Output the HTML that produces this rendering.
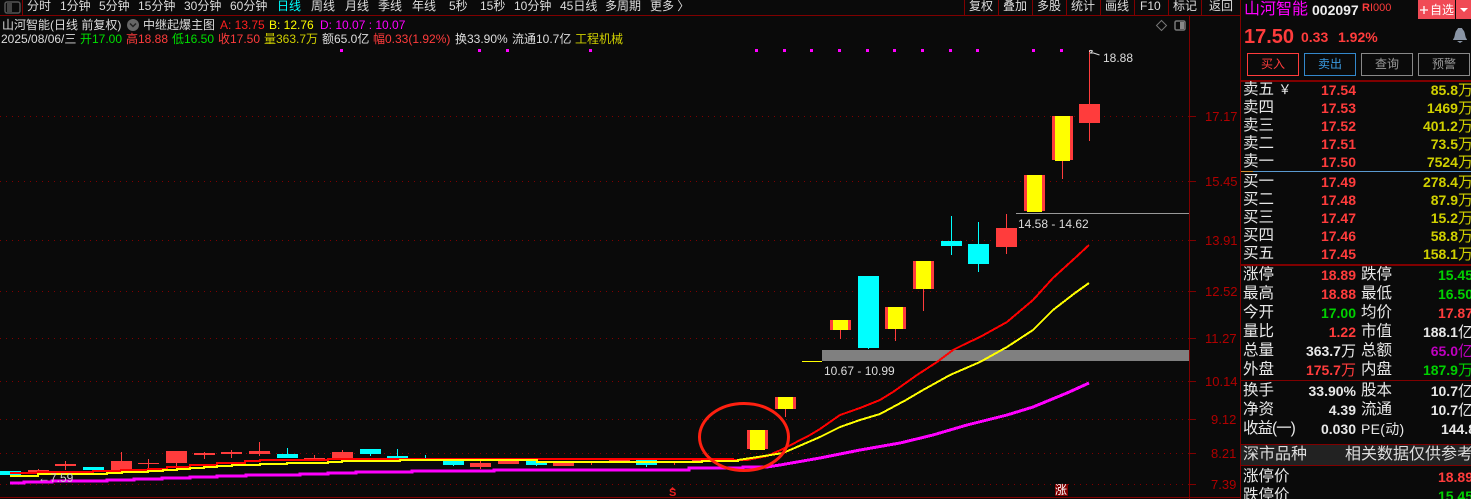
<!DOCTYPE html>
<html><head><meta charset="utf-8"><style>
html,body{margin:0;padding:0;background:#0a0a0a;width:1471px;height:499px;overflow:hidden}
body{position:relative;font-family:"Liberation Sans","WenQuanYi Zen Hei","Noto Sans CJK SC",sans-serif;font-size:12px;color:#ddd}
.t{position:absolute;white-space:nowrap;line-height:14px;height:14px}
.r{position:absolute;white-space:nowrap;line-height:16px;height:16px;text-align:right;font-weight:bold;font-size:14px}
.l{position:absolute;left:1243px;white-space:nowrap;line-height:16px;height:16px;font-size:15.5px;color:#e8e8e8}
.m{left:1361px}
.a{position:absolute;left:1205px;color:#b00000;font-size:13px;line-height:14px}
.re{color:#ff3c3c}.gr{color:#00d000}.ye{color:#d0d000}.wh{color:#e8e8e8}
.n{font-weight:normal;font-size:15px}
.btn{position:absolute;top:53px;height:21px;line-height:21px;width:50px;text-align:center;font-size:12px;border:1px solid #888;color:#999}
svg{position:absolute;left:0;top:0}
</style></head><body>
<svg width="1471" height="499" viewBox="0 0 1471 499">
<g shape-rendering="crispEdges">
<g stroke="#800000" stroke-width="1" stroke-dasharray="1 5">
<path d="M0 116.5H1189M0 181.5H1189M0 240.5H1189M0 291.5H1189M0 338.5H1189M0 381.5H1189M0 419.5H1189M0 453.5H1189M0 484.5H1189"/>
</g>
<g fill="#800000">
<rect x="0" y="15" width="1240" height="1"/><rect x="22" y="0" width="1" height="15"/>
<rect x="964" y="0" width="1" height="15"/><rect x="998" y="0" width="1" height="15"/><rect x="1032" y="0" width="1" height="15"/><rect x="1066" y="0" width="1" height="15"/><rect x="1100" y="0" width="1" height="15"/><rect x="1134" y="0" width="1" height="15"/><rect x="1168" y="0" width="1" height="15"/><rect x="1201" y="0" width="1" height="15"/>
<rect x="1189" y="16" width="1" height="483"/><rect x="1240" y="0" width="1" height="499"/>
<rect x="0" y="497" width="1240" height="1"/>
<rect x="1190" y="116" width="6" height="1"/><rect x="1190" y="181" width="6" height="1"/><rect x="1190" y="240" width="6" height="1"/><rect x="1190" y="291" width="6" height="1"/><rect x="1190" y="338" width="6" height="1"/><rect x="1190" y="381" width="6" height="1"/><rect x="1190" y="419" width="6" height="1"/><rect x="1190" y="453" width="6" height="1"/><rect x="1190" y="484" width="6" height="1"/>
<rect x="1241" y="80" width="230" height="2"/><rect x="1241" y="264" width="230" height="2"/><rect x="1241" y="380" width="230" height="1"/><rect x="1241" y="444" width="230" height="1"/><rect x="1241" y="465" width="230" height="1"/>
</g>
<rect x="1241" y="445" width="230" height="20" fill="#222"/>
<rect x="1241" y="171" width="230" height="1" fill="#5a9ad0"/><rect x="1241" y="171" width="12" height="1" fill="#d09030"/>
<g fill="#ff00ff">
<rect x="340" y="49" width="3" height="3"/><rect x="478" y="49" width="3" height="3"/><rect x="506" y="49" width="3" height="3"/><rect x="589" y="49" width="3" height="3"/><rect x="755" y="49" width="3" height="3"/><rect x="783" y="49" width="3" height="3"/><rect x="810" y="49" width="3" height="3"/><rect x="838" y="49" width="3" height="3"/><rect x="866" y="49" width="3" height="3"/><rect x="893" y="49" width="3" height="3"/><rect x="921" y="49" width="3" height="3"/><rect x="949" y="49" width="3" height="3"/><rect x="976" y="49" width="3" height="3"/><rect x="1032" y="49" width="3" height="3"/><rect x="1060" y="49" width="3" height="3"/>
</g>
<g fill="#ff3c3c">
<rect x="1079" y="104" width="21" height="19"/><rect x="1089" y="50" width="1" height="91"/>
<rect x="1052" y="116" width="21" height="44"/><rect x="1062" y="160" width="1" height="19"/>
<rect x="1024" y="175" width="21" height="36"/>
<rect x="996" y="228" width="21" height="19"/><rect x="1006" y="214" width="1" height="40"/>
<rect x="913" y="261" width="21" height="28"/><rect x="923" y="289" width="1" height="22"/>
<rect x="885" y="307" width="21" height="22"/><rect x="895" y="329" width="1" height="12"/>
<rect x="830" y="320" width="21" height="10"/><rect x="840" y="330" width="1" height="9"/>
<rect x="775" y="397" width="21" height="12"/><rect x="785" y="409" width="1" height="8"/>
<rect x="747" y="430" width="21" height="19"/>
<rect x="692" y="458" width="21" height="3"/><rect x="674" y="461" width="1" height="4"/>
<rect x="609" y="460" width="21" height="2"/><rect x="619" y="458" width="1" height="4"/>
<rect x="591" y="461" width="1" height="4"/>
<rect x="553" y="463" width="21" height="3"/><rect x="470" y="463" width="21" height="4"/><rect x="480" y="461" width="1" height="8"/>
<rect x="498" y="461" width="21" height="3"/>
<rect x="28" y="470" width="21" height="3"/><rect x="38" y="469" width="1" height="3"/>
<rect x="55" y="464" width="21" height="2"/><rect x="65" y="461" width="1" height="9"/>
<rect x="111" y="461" width="21" height="12"/><rect x="121" y="452" width="1" height="10"/>
<rect x="138" y="463" width="21" height="1"/><rect x="148" y="459" width="1" height="9"/>
<rect x="166" y="451" width="21" height="12"/><rect x="176" y="463" width="1" height="3"/>
<rect x="194" y="453" width="21" height="2"/><rect x="204" y="452" width="1" height="7"/>
<rect x="221" y="452" width="21" height="2"/><rect x="231" y="450" width="1" height="8"/>
<rect x="249" y="451" width="21" height="3"/><rect x="259" y="442" width="1" height="14"/>
<rect x="304" y="458" width="21" height="1"/><rect x="314" y="455" width="1" height="5"/>
<rect x="332" y="452" width="21" height="6"/><rect x="342" y="450" width="1" height="3"/>
</g>
<g fill="#ffff00">
<rect x="1055" y="116" width="15" height="45"/>
<rect x="1027" y="175" width="15" height="37"/>
<rect x="916" y="261" width="15" height="28"/>
<rect x="888" y="307" width="15" height="22"/>
<rect x="833" y="320" width="15" height="10"/>
<rect x="778" y="397" width="15" height="12"/>
<rect x="750" y="430" width="15" height="20"/>
<rect x="802" y="361" width="20" height="1"/>
</g>
<g fill="#00ffff">
<rect x="858" y="276" width="21" height="72"/><rect x="868" y="348" width="1" height="1"/>
<rect x="968" y="244" width="21" height="20"/><rect x="978" y="222" width="1" height="50"/>
<rect x="941" y="241" width="21" height="5"/><rect x="951" y="216" width="1" height="39"/>
<rect x="719" y="459" width="16" height="2"/>
<rect x="636" y="460" width="21" height="5"/><rect x="646" y="465" width="1" height="2"/>
<rect x="526" y="461" width="21" height="4"/><rect x="536" y="465" width="1" height="1"/>
<rect x="443" y="461" width="21" height="4"/><rect x="453" y="465" width="1" height="1"/>
<rect x="425" y="455" width="1" height="6"/>
<rect x="387" y="456" width="21" height="2"/><rect x="397" y="449" width="1" height="10"/>
<rect x="360" y="449" width="21" height="5"/><rect x="370" y="454" width="1" height="2"/>
<rect x="277" y="454" width="21" height="4"/><rect x="287" y="448" width="1" height="6"/>
<rect x="83" y="467" width="21" height="3"/>
<rect x="0" y="471" width="21" height="4"/>
</g>
<rect x="822" y="350" width="367" height="11" fill="#808080"/>
<rect x="1016" y="213" width="173" height="1" fill="#999"/>
<path fill="none" stroke="#ff0000" stroke-width="2" d="M10 473H38V472H93V471H121V470H148V469H167V467H190V465H217V463H245V461H260V460H328V459H733V460L747 460L767 456L783 449L810 435L820 429L840 415L860 408L880 400L893 392L917 375L937 362L953 350L963 345L980 337L1007 322L1020 311L1033 300L1053 278L1075 258L1089 245"/>
<path fill="none" stroke="#ffff00" stroke-width="2" d="M10 476H38V474H107V473H122V472H148V471H163V470H177V469H190V468H204V467H217V466H232V465H260V464H287V463H328V462H342V461H400V460H537V462H702V461H738V460L758 457L783 453L820 437L840 427L860 420L880 414L906 400L923 390L950 375L980 362L1007 347L1033 330L1053 310L1075 293L1089 283"/>
<path fill="none" stroke="#ff00ff" stroke-width="3" d="M10 483H24V482H52V481H107V480H134V479H162V478H190V477H217V476H246V475H300V474H328V473H356V472H412V471H494V470H689V468H743V467H767L780 465L820 458L860 450L900 443L933 435L967 425L1007 415L1033 407L1067 393L1089 383"/>
</g>
<ellipse cx="744" cy="437" rx="44.500" ry="33.500" fill="none" stroke="#ff2010" stroke-width="3"/>
<rect x="5" y="2" width="15" height="11" rx="2" fill="none" stroke="#555" stroke-width="1.500"/><rect x="7" y="3" width="5" height="9" fill="#444"/>
<circle cx="133" cy="25" r="6" fill="#666"/><path d="M130 23.500l3 3 3-3" fill="none" stroke="#222" stroke-width="1.500"/>
<path d="M1161.500 20.500l5 5-5 5-5-5z" fill="none" stroke="#777"/>
<rect x="1175" y="21" width="10" height="9" rx="1.500" fill="none" stroke="#777" stroke-width="1.500"/><rect x="1180" y="22" width="4" height="7" fill="#888"/>
<path d="M1089.500 52c0-2 2-2 3-1l-2 2 3 0 6 2" fill="none" stroke="#ddd"/>
<path d="M672.500 487l3 3h-6z" fill="#e82020"/>
<rect x="1055" y="484" width="13" height="12" fill="#800000"/>
<rect x="1418" y="0" width="37" height="19" fill="#f04a55"/><rect x="1456" y="0" width="15" height="19" fill="#f04a55"/>
<path d="M1460 8h8l-4 4z" fill="#fff"/>
<path d="M1420 10h8M1424 6v8" stroke="#fff" stroke-width="1.300"/>
<path d="M1458 28h4c0 1 1 1 1 2 2 1 2 6 3 8 1 1 1 2 1 2h-14s0-1 1-2c1-2 1-7 3-8 0-1 1-1 1-2z M1457 41h6l-3 2z" fill="#8a95a5"/>
</svg>
<span class="t" style="left:27px;top:-1px">分时</span><span class="t" style="left:60px;top:-1px">1分钟</span><span class="t" style="left:99px;top:-1px">5分钟</span><span class="t" style="left:138px;top:-1px">15分钟</span><span class="t" style="left:184px;top:-1px">30分钟</span><span class="t" style="left:230px;top:-1px">60分钟</span><span class="t" style="left:277px;top:-1px;color:#00ffff">日线</span><span class="t" style="left:311px;top:-1px">周线</span><span class="t" style="left:345px;top:-1px">月线</span><span class="t" style="left:378px;top:-1px">季线</span><span class="t" style="left:412px;top:-1px">年线</span><span class="t" style="left:449px;top:-1px">5秒</span><span class="t" style="left:480px;top:-1px">15秒</span><span class="t" style="left:514px;top:-1px">10分钟</span><span class="t" style="left:560px;top:-1px">45日线</span><span class="t" style="left:605px;top:-1px">多周期</span><span class="t" style="left:650px;top:-1px">更多 〉</span>
<span class="t" style="left:969px;top:-1px">复权</span><span class="t" style="left:1003px;top:-1px">叠加</span><span class="t" style="left:1037px;top:-1px">多股</span><span class="t" style="left:1071px;top:-1px">统计</span><span class="t" style="left:1105px;top:-1px">画线</span><span class="t" style="left:1140px;top:-1px">F10</span><span class="t" style="left:1173px;top:-1px">标记</span><span class="t" style="left:1209px;top:-1px">返回</span>
<span class="t" style="left:2px;top:18px">山河智能(日线 前复权)</span>
<span class="t" style="left:143px;top:18px">中继起爆主图</span>
<span class="t" style="left:220px;top:18px;color:#ff2020">A: 13.75</span>
<span class="t" style="left:269px;top:18px;color:#ffff00">B: 12.76</span>
<span class="t" style="left:320px;top:18px;color:#ff00ff">D: 10.07 : 10.07</span>
<span class="t" style="left:1px;top:32px">2025/08/06/三</span>
<span class="t" style="left:80px;top:32px;color:#00e000">开17.00</span>
<span class="t" style="left:126px;top:32px;color:#ff3c3c">高18.88</span>
<span class="t" style="left:172px;top:32px;color:#00e000">低16.50</span>
<span class="t" style="left:218px;top:32px;color:#ff3c3c">收17.50</span>
<span class="t" style="left:264px;top:32px;color:#d0d000">量363.7万</span>
<span class="t" style="left:322px;top:32px">额65.0亿</span>
<span class="t" style="left:373px;top:32px;color:#ff3c3c">幅0.33(1.92%)</span>
<span class="t" style="left:455px;top:32px">换33.90%</span>
<span class="t" style="left:512px;top:32px">流通10.7亿</span>
<span class="t" style="left:575px;top:32px;color:#d0d000">工程机械</span>
<span class="t" style="left:1103px;top:51px">18.88</span>
<span class="t" style="left:1018px;top:217px">14.58 - 14.62</span>
<span class="t" style="left:824px;top:364px">10.67 - 10.99</span>
<span class="t" style="left:38px;top:471px;color:#ccc">←7.59</span>
<span class="t" style="left:669px;top:487px;font-size:11px;color:#e82020;font-weight:bold;line-height:12px">S</span>
<span class="t" style="left:1055px;top:483px;color:#fff">涨</span>
<span class="a" style="top:110px">17.17</span><span class="a" style="top:175px">15.45</span><span class="a" style="top:234px">13.91</span><span class="a" style="top:285px">12.52</span><span class="a" style="top:332px">11.27</span><span class="a" style="top:375px">10.14</span><span class="a" style="top:413px;left:1211px">9.12</span><span class="a" style="top:447px;left:1211px">8.21</span><span class="a" style="top:478px;left:1211px">7.39</span>
<span class="t" style="left:1244px;top:2px;font-size:16px;color:#ff00ff;line-height:16px;height:16px">山河智能</span>
<span class="t" style="left:1312px;top:3px;font-size:14px;font-weight:bold;color:#eee">002097</span>
<span class="t" style="left:1362px;top:1px;font-size:11px;color:#ff3c3c"><b>R</b>I000</span>
<span class="t" style="left:1430px;top:3px;font-size:12px;color:#fff">自选</span>
<span class="t" style="left:1244px;top:27px;font-size:20px;font-weight:bold;color:#ff3c3c;line-height:20px;height:20px">17.50</span>
<span class="t" style="left:1301px;top:30px;font-size:14px;font-weight:bold;color:#ff3c3c">0.33</span>
<span class="t" style="left:1338px;top:30px;font-size:14px;font-weight:bold;color:#ff3c3c">1.92%</span>
<div class="btn" style="left:1247px;border-color:#ff3c3c;color:#ff3c3c">买入</div>
<div class="btn" style="left:1304px;border-color:#3388cc;color:#3a9ae0">卖出</div>
<div class="btn" style="left:1361px">查询</div>
<div class="btn" style="left:1418px">预警</div>
<span class="l" style="top:82px">卖五 <span style="font-size:13px">￥</span></span><span class="l" style="top:100px">卖四</span><span class="l" style="top:118px">卖三</span><span class="l" style="top:136px">卖二</span><span class="l" style="top:154px">卖一</span>
<span class="l" style="top:174px">买一</span><span class="l" style="top:192px">买二</span><span class="l" style="top:210px">买三</span><span class="l" style="top:228px">买四</span><span class="l" style="top:246px">买五</span>
<span class="r re" style="right:115px;top:82px">17.54</span><span class="r re" style="right:115px;top:100px">17.53</span><span class="r re" style="right:115px;top:118px">17.52</span><span class="r re" style="right:115px;top:136px">17.51</span><span class="r re" style="right:115px;top:154px">17.50</span>
<span class="r re" style="right:115px;top:174px">17.49</span><span class="r re" style="right:115px;top:192px">17.48</span><span class="r re" style="right:115px;top:210px">17.47</span><span class="r re" style="right:115px;top:228px">17.46</span><span class="r re" style="right:115px;top:246px">17.45</span>
<span class="r ye" style="right:-2px;top:82px">85.8<span class="n">万</span></span><span class="r ye" style="right:-2px;top:100px">1469<span class="n">万</span></span><span class="r ye" style="right:-2px;top:118px">401.2<span class="n">万</span></span><span class="r ye" style="right:-2px;top:136px">73.5<span class="n">万</span></span><span class="r ye" style="right:-2px;top:154px">7524<span class="n">万</span></span>
<span class="r ye" style="right:-2px;top:174px">278.4<span class="n">万</span></span><span class="r ye" style="right:-2px;top:192px">87.9<span class="n">万</span></span><span class="r ye" style="right:-2px;top:210px">15.2<span class="n">万</span></span><span class="r ye" style="right:-2px;top:228px">58.8<span class="n">万</span></span><span class="r ye" style="right:-2px;top:246px">158.1<span class="n">万</span></span>
<span class="l" style="top:267px">涨停</span><span class="l" style="top:286px">最高</span><span class="l" style="top:305px">今开</span><span class="l" style="top:324px">量比</span><span class="l" style="top:343px">总量</span><span class="l" style="top:362px">外盘</span>
<span class="l m" style="top:267px">跌停</span><span class="l m" style="top:286px">最低</span><span class="l m" style="top:305px">均价</span><span class="l m" style="top:324px">市值</span><span class="l m" style="top:343px">总额</span><span class="l m" style="top:362px">内盘</span>
<span class="r re" style="right:115px;top:267px">18.89</span><span class="r re" style="right:115px;top:286px">18.88</span><span class="r gr" style="right:115px;top:305px">17.00</span><span class="r re" style="right:115px;top:324px">1.22</span><span class="r wh" style="right:115px;top:343px">363.7<span class="n">万</span></span><span class="r re" style="right:115px;top:362px">175.7<span class="n">万</span></span>
<span class="r gr" style="right:-2px;top:267px">15.45</span><span class="r gr" style="right:-2px;top:286px">16.50</span><span class="r re" style="right:-2px;top:305px">17.87</span><span class="r wh" style="right:-2px;top:324px">188.1<span class="n">亿</span></span><span class="r" style="right:-2px;top:343px;color:#c000c0">65.0<span class="n">亿</span></span><span class="r gr" style="right:-2px;top:362px">187.9<span class="n">万</span></span>
<span class="l" style="top:383px">换手</span><span class="l" style="top:402px">净资</span><span class="l" style="top:421px;letter-spacing:-1px">收益(一)</span>
<span class="l m" style="top:383px">股本</span><span class="l m" style="top:402px">流通</span><span class="l m" style="top:421px;font-size:14px;letter-spacing:.3px">PE(动)</span>
<span class="r wh" style="right:115px;top:383px">33.90%</span><span class="r wh" style="right:115px;top:402px">4.39</span><span class="r wh" style="right:115px;top:421px">0.030</span>
<span class="r wh" style="right:-2px;top:383px">10.7<span class="n">亿</span></span><span class="r wh" style="right:-2px;top:402px">10.7<span class="n">亿</span></span><span class="r wh" style="right:-5px;top:421px">144.8</span>
<span class="l" style="top:447px;font-size:16px;color:#ddd">深市品种</span>
<span class="l" style="top:447px;left:1345px;font-size:16px;color:#ddd">相关数据仅供参考</span>
<span class="l" style="top:469px">涨停价</span><span class="l" style="top:488px">跌停价</span>
<span class="r re" style="right:-2px;top:469px">18.89</span><span class="r gr" style="right:-2px;top:488px">15.45</span>
</body></html>
